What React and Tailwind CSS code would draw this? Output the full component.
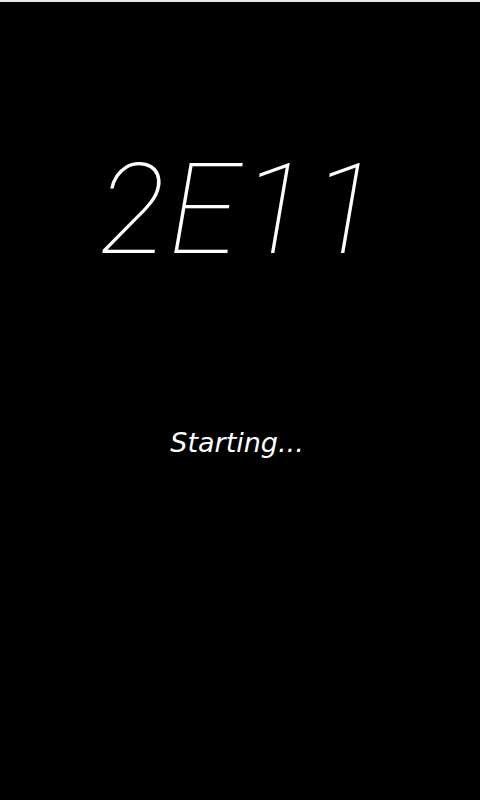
export default function App() {
  return (
    <div className="w-[480px] h-[800px] bg-black border-t-2 border-[#e8e8e8] flex flex-col items-center text-white">
      <h1 className="mt-[133px] font-['Roboto','Liberation_Sans',sans-serif] text-[126px] leading-[150px] font-thin italic tracking-[3px]">
        2E11
      </h1>
      <p className="mt-[138px] pr-[6px] font-['DejaVu_Sans','Liberation_Sans',sans-serif] text-[27px] leading-[40px] font-normal italic">
        Starting...
      </p>
    </div>
  );
}
